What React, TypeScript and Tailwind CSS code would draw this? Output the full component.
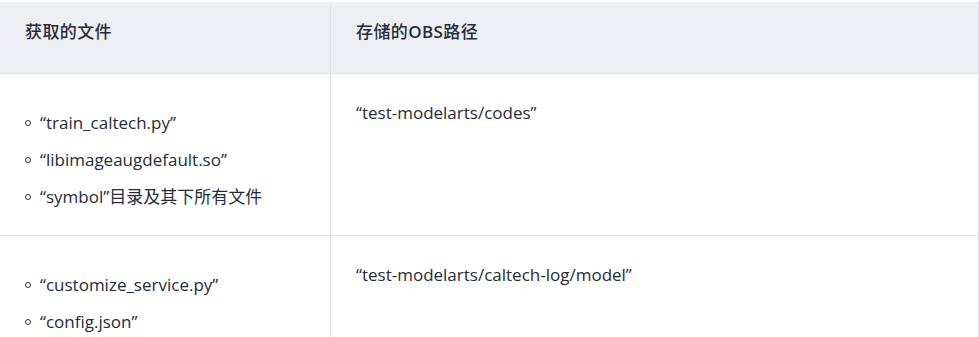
const rows = [
  {
    files: ['“train_caltech.py”', '“libimageaugdefault.so”', '“symbol”目录及其下所有文件'],
    path: '“test-modelarts/codes”',
  },
  {
    files: ['“customize_service.py”', '“config.json”'],
    path: '“test-modelarts/caltech-log/model”',
  },
];

function Bullet({ text }: { text: string }) {
  return (
    <li className="flex items-center h-[26px] mt-[11px] first:mt-[10px]">
      <span className="w-[6px] h-[6px] rounded-full border-[1.5px] border-[#252b3a] mr-[9px] shrink-0" />
      <span>{text}</span>
    </li>
  );
}

export default function App() {
  return (
    <div
      className="w-[979px] h-[337px] overflow-hidden bg-white pt-[2px] text-[17px] leading-[26px] text-[#252b3a]"
      style={{ fontFamily: '"Open Sans", "Noto Sans CJK SC", sans-serif' }}
    >
      <div className="grid grid-cols-[331px_1fr] border-r border-[#dfe1e6]">
        <div className="bg-[#eeeff3] h-[72px] border-b border-r border-[#dfe1e6] pl-[25px] pt-[17px] font-medium tracking-[0.4px]">
          获取的文件
        </div>
        <div className="bg-[#eeeff3] h-[72px] border-b border-[#dfe1e6] pl-[25px] pt-[17px] font-medium tracking-[0.4px]">
          存储的<span className="font-semibold">OBS</span>路径
        </div>
        {rows.map((row, i) => (
          <div key={i} className="contents">
            <div className="border-b border-r border-[#dfe1e6] pl-[25px] pt-[26px] pb-[25px]">
              <ul>
                {row.files.map((f) => (
                  <Bullet key={f} text={f} />
                ))}
              </ul>
            </div>
            <div className="border-b border-[#dfe1e6] pl-[25px] pt-[26px]">{row.path}</div>
          </div>
        ))}
      </div>
    </div>
  );
}
